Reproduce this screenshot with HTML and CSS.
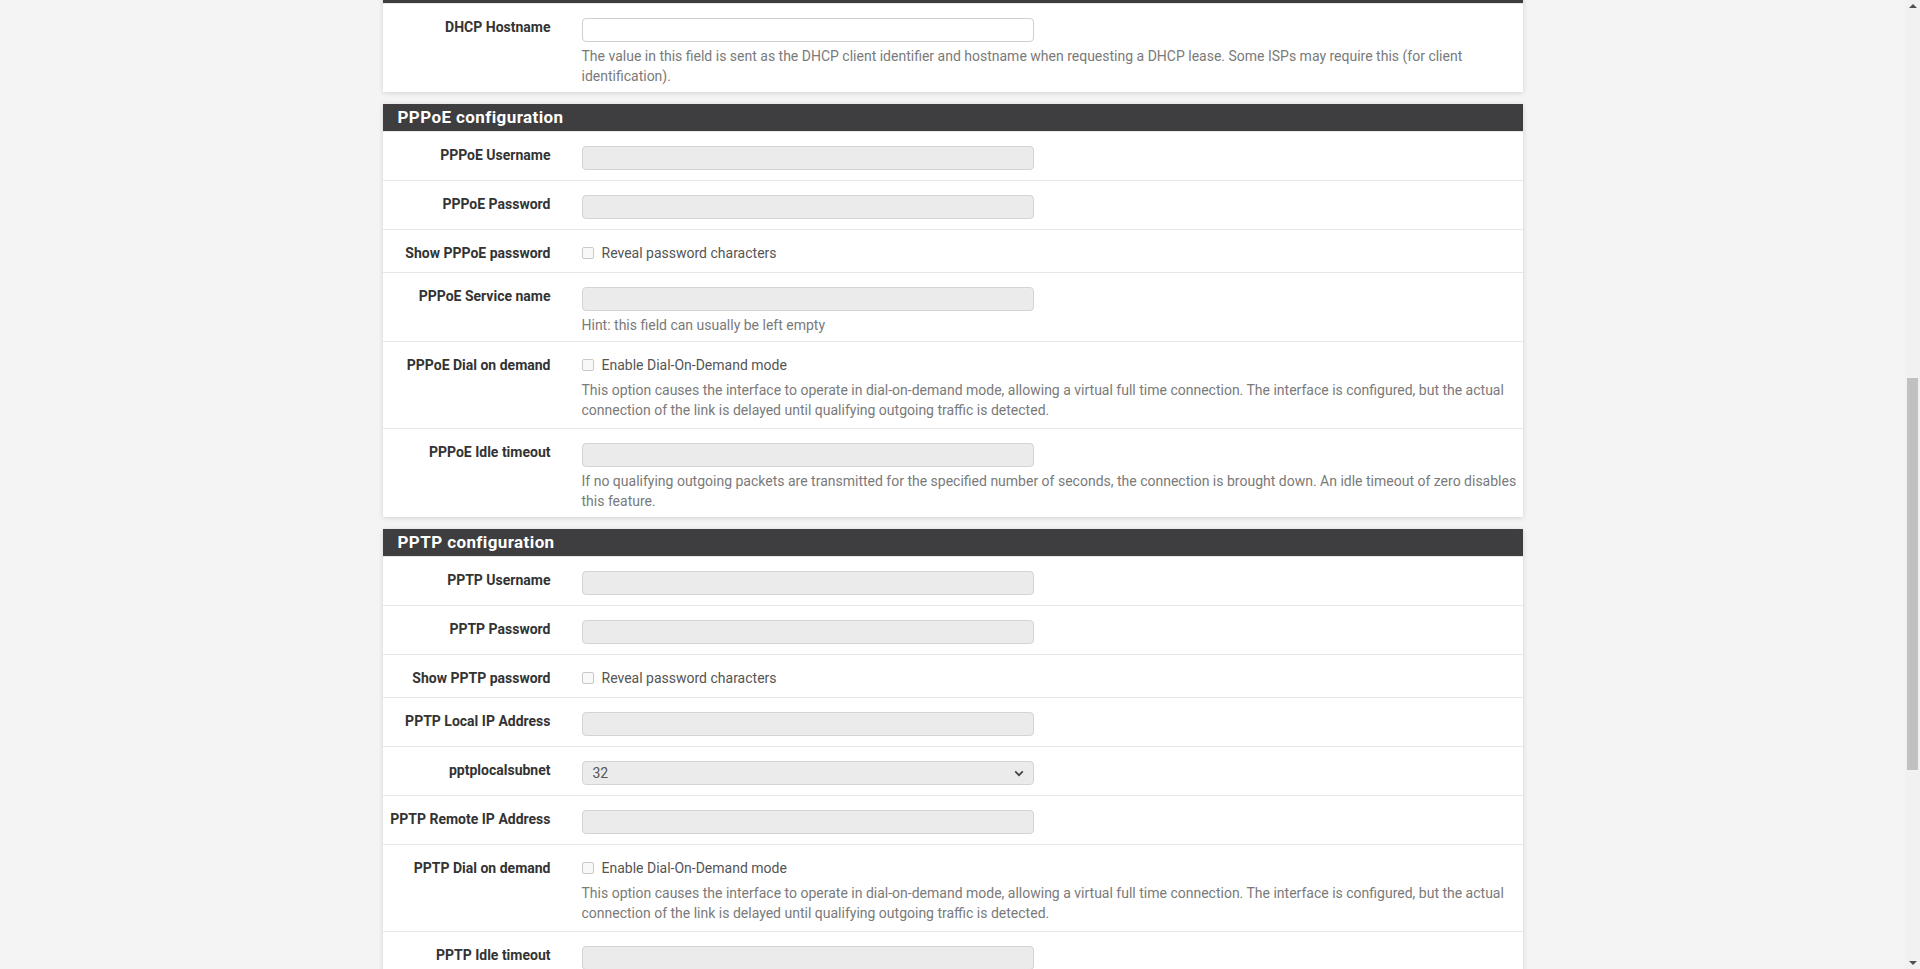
FILE: index.html
```html
<!DOCTYPE html>
<html lang="en">
<head>
<meta charset="utf-8">
<title>Interfaces</title>
<link rel="stylesheet" href="styles.css">
</head>
<body>
<div class="viewport">
  <main class="container">
    <section class="panel">
      <h2 class="panel-title">DHCP client configuration</h2>
      <div class="form-row">
        <div class="col-label">DHCP Hostname</div>
        <div class="col-field">
          <div class="input"></div>
          <p class="help">The value in this field is sent as the DHCP client identifier and hostname when requesting a DHCP lease. Some ISPs may require this (for client identification).</p>
        </div>
      </div>
    </section>

    <section class="panel">
      <h2 class="panel-title">PPPoE configuration</h2>
      <div class="form-row">
        <div class="col-label">PPPoE Username</div>
        <div class="col-field"><div class="input disabled"></div></div>
      </div>
      <div class="form-row">
        <div class="col-label">PPPoE Password</div>
        <div class="col-field"><div class="input disabled"></div></div>
      </div>
      <div class="form-row">
        <div class="col-label">Show PPPoE password</div>
        <div class="col-field"><div class="check"><span class="box"></span>Reveal password characters</div></div>
      </div>
      <div class="form-row">
        <div class="col-label">PPPoE Service name</div>
        <div class="col-field">
          <div class="input disabled"></div>
          <p class="help">Hint: this field can usually be left empty</p>
        </div>
      </div>
      <div class="form-row">
        <div class="col-label">PPPoE Dial on demand</div>
        <div class="col-field">
          <div class="check"><span class="box"></span>Enable Dial-On-Demand mode</div>
          <p class="help">This option causes the interface to operate in dial-on-demand mode, allowing a virtual full time connection. The interface is configured, but the actual connection of the link is delayed until qualifying outgoing traffic is detected.</p>
        </div>
      </div>
      <div class="form-row">
        <div class="col-label">PPPoE Idle timeout</div>
        <div class="col-field">
          <div class="input disabled"></div>
          <p class="help">If no qualifying outgoing packets are transmitted for the specified number of seconds, the connection is brought down. An idle timeout of zero disables this feature.</p>
        </div>
      </div>
    </section>

    <section class="panel">
      <h2 class="panel-title">PPTP configuration</h2>
      <div class="form-row">
        <div class="col-label">PPTP Username</div>
        <div class="col-field"><div class="input disabled"></div></div>
      </div>
      <div class="form-row">
        <div class="col-label">PPTP Password</div>
        <div class="col-field"><div class="input disabled"></div></div>
      </div>
      <div class="form-row">
        <div class="col-label">Show PPTP password</div>
        <div class="col-field"><div class="check"><span class="box"></span>Reveal password characters</div></div>
      </div>
      <div class="form-row">
        <div class="col-label">PPTP Local IP Address</div>
        <div class="col-field"><div class="input disabled"></div></div>
      </div>
      <div class="form-row">
        <div class="col-label">pptplocalsubnet</div>
        <div class="col-field">
          <div class="input disabled select"><span>32</span>
            <svg class="chev" width="10" height="7" viewBox="0 0 10 7"><path d="M1.2 1.4 L5 5.2 L8.8 1.4" fill="none" stroke="#444" stroke-width="1.7"/></svg>
          </div>
        </div>
      </div>
      <div class="form-row">
        <div class="col-label">PPTP Remote IP Address</div>
        <div class="col-field"><div class="input disabled"></div></div>
      </div>
      <div class="form-row">
        <div class="col-label">PPTP Dial on demand</div>
        <div class="col-field">
          <div class="check"><span class="box"></span>Enable Dial-On-Demand mode</div>
          <p class="help">This option causes the interface to operate in dial-on-demand mode, allowing a virtual full time connection. The interface is configured, but the actual connection of the link is delayed until qualifying outgoing traffic is detected.</p>
        </div>
      </div>
      <div class="form-row">
        <div class="col-label">PPTP Idle timeout</div>
        <div class="col-field">
          <div class="input disabled"></div>
          <p class="help">If no qualifying outgoing packets are transmitted for the specified number of seconds, the connection is brought down. An idle timeout of zero disables this feature.</p>
        </div>
      </div>
    </section>
  </main>
</div>
<div class="scrollbar">
  <span class="arrow up"></span>
  <span class="thumb"></span>
  <span class="arrow down"></span>
</div>
</body>
</html>
```

FILE: styles.css
```css
html, body {
  margin: 0;
  height: 100%;
  overflow: hidden;
}
body {
  background: #f4f4f5;
  font-family: Roboto, "Noto Sans", Arial, sans-serif;
  color: #333;
}
.viewport {
  width: 1905px;
}
.container {
  width: 1140px;
  margin: -24px auto 0;
}
.panel {
  background: #fff;
  box-shadow: 0 1px 5px rgba(0, 0, 0, 0.14);
  margin-bottom: 12px;
}
.panel-title {
  margin: 0;
  height: 27px;
  line-height: 27px;
  padding-left: 15px;
  background: #3e3d3f;
  color: #fff;
  font-size: 17px;
  font-weight: 700;
  letter-spacing: 0.4px;
}
.form-row {
  display: flex;
  border-top: 1px solid #e7e7e7;
  padding: 14px 0 10px;
}
.col-label {
  flex: none;
  width: 168px;
  text-align: right;
  font-size: 14px;
  font-weight: 700;
  line-height: 18px;
  color: #333;
}
.col-field {
  flex: 1;
  margin-left: 31px;
  padding-right: 4px;
}
.input {
  width: 452px;
  height: 24px;
  box-sizing: border-box;
  border: 1px solid #cfcfcf;
  border-radius: 4px;
  background: #fff;
}
.input.disabled {
  background: #ebebeb;
  border-color: #d4d4d4;
}
.select {
  display: flex;
  align-items: center;
  justify-content: space-between;
  padding: 0 9px 0 10px;
  font-size: 14px;
  color: #555;
}
.chev {
  display: block;
}
.help {
  margin: 4px 0 -4px;
  font-size: 14px;
  line-height: 20px;
  color: #7a7a7a;
}
.check {
  display: flex;
  align-items: center;
  height: 18px;
  font-size: 14px;
  color: #555;
}
.check + .help {
  margin: 6px 0 -2px;
}
.box {
  width: 12px;
  height: 12px;
  box-sizing: border-box;
  border: 1px solid #c9c9c9;
  border-radius: 2px;
  background: #f8f8f8;
  margin: 0 8px 0 0;
}
.scrollbar {
  position: fixed;
  top: 0;
  right: 0;
  width: 15px;
  height: 100%;
  background: #f1f1f1;
}
.thumb {
  position: absolute;
  left: 2px;
  top: 378px;
  width: 11px;
  height: 392px;
  background: #c1c1c1;
}
.arrow {
  position: absolute;
  left: 4px;
  width: 0;
  height: 0;
  border-left: 4px solid transparent;
  border-right: 4px solid transparent;
}
.arrow.up {
  top: 4px;
  border-bottom: 4px solid #505050;
}
.arrow.down {
  bottom: 4px;
  border-top: 4px solid #505050;
}
```
